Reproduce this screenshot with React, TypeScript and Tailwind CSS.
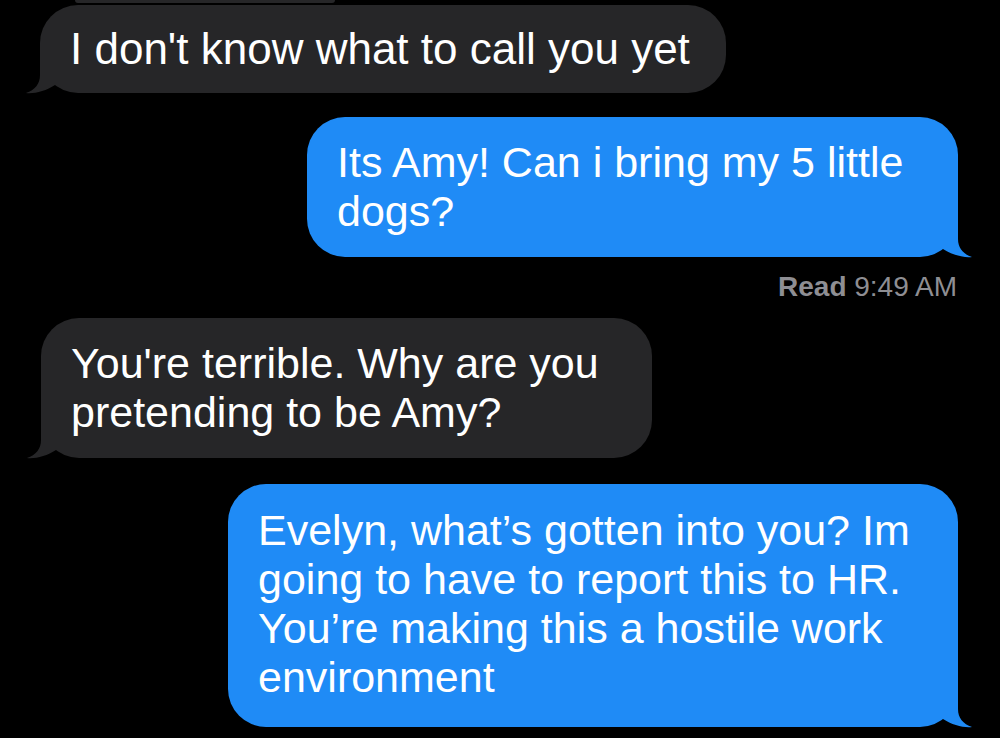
import React from "react";

/**
 * Dark-mode message thread: grey incoming bubbles on the left, blue outgoing
 * bubbles on the right, each with its little tail, plus a read receipt.
 */

const GREY = "#262628";
const BLUE = "#1f8bf6";

function Tail({ side, color }: { side: "left" | "right"; color: string }) {
  return (
    <svg
      width="56"
      height="40"
      viewBox="0 0 56 40"
      className={
        side === "right"
          ? "absolute bottom-0 right-[-16px] overflow-visible"
          : "absolute bottom-0 left-[-16px] overflow-visible -scale-x-100"
      }
    >
      <path
        d="M40 0 L40 22 C40 31 45 37 54 40 C46 41 34 38 25 32 L0 32 L0 0 Z"
        fill={color}
      />
    </svg>
  );
}

function Bubble({
  from,
  className,
  children,
}: {
  from: "me" | "them";
  className: string;
  children: React.ReactNode;
}) {
  const mine = from === "me";
  return (
    <div
      className={`relative rounded-[38px] pl-[30px] text-white ${
        mine ? "self-end bg-[#1f8bf6]" : "self-start bg-[#262628]"
      } ${className}`}
    >
      {/* tail first so the text paints over it */}
      <Tail side={mine ? "right" : "left"} color={mine ? BLUE : GREY} />
      <p className="relative">{children}</p>
    </div>
  );
}

export default function App() {
  return (
    <div className="flex h-[738px] w-[1000px] flex-col overflow-hidden bg-black font-['Liberation_Sans',Arial,sans-serif]">
      {/* bottom edge of the previous message, scrolled off the top */}
      <div className="ml-[75px] h-[3px] w-[260px] rounded-b-[3px] bg-[#262628]" />

      <Bubble from="them" className="ml-[40px] mt-[2px] pr-[36px] py-[20px] text-[44px] leading-[48px]">
        I don't know what to call you yet
      </Bubble>

      <Bubble from="me" className="mr-[42px] mt-[24px] w-[651px] pr-[30px] py-[21px] text-[43px] leading-[49px]">
        Its Amy! Can i bring my 5 little dogs?
      </Bubble>

      <div className="mr-[43px] mt-[13px] self-end text-[28px] leading-[34px] text-[#8e8e93]">
        <span className="font-bold">Read</span> 9:49 AM
      </div>

      <Bubble from="them" className="ml-[41px] mt-[14px] w-[611px] pr-[30px] py-[21px] text-[43px] leading-[49px]">
        You're terrible. Why are you pretending to be Amy?
      </Bubble>

      <Bubble from="me" className="mr-[42px] mt-[26px] w-[730px] pr-[30px] pt-[22px] pb-[25px] text-[43px] leading-[49px]">
        Evelyn, what’s gotten into you? Im going to have to report this to HR. You’re making this a
        hostile work environment
      </Bubble>
    </div>
  );
}
